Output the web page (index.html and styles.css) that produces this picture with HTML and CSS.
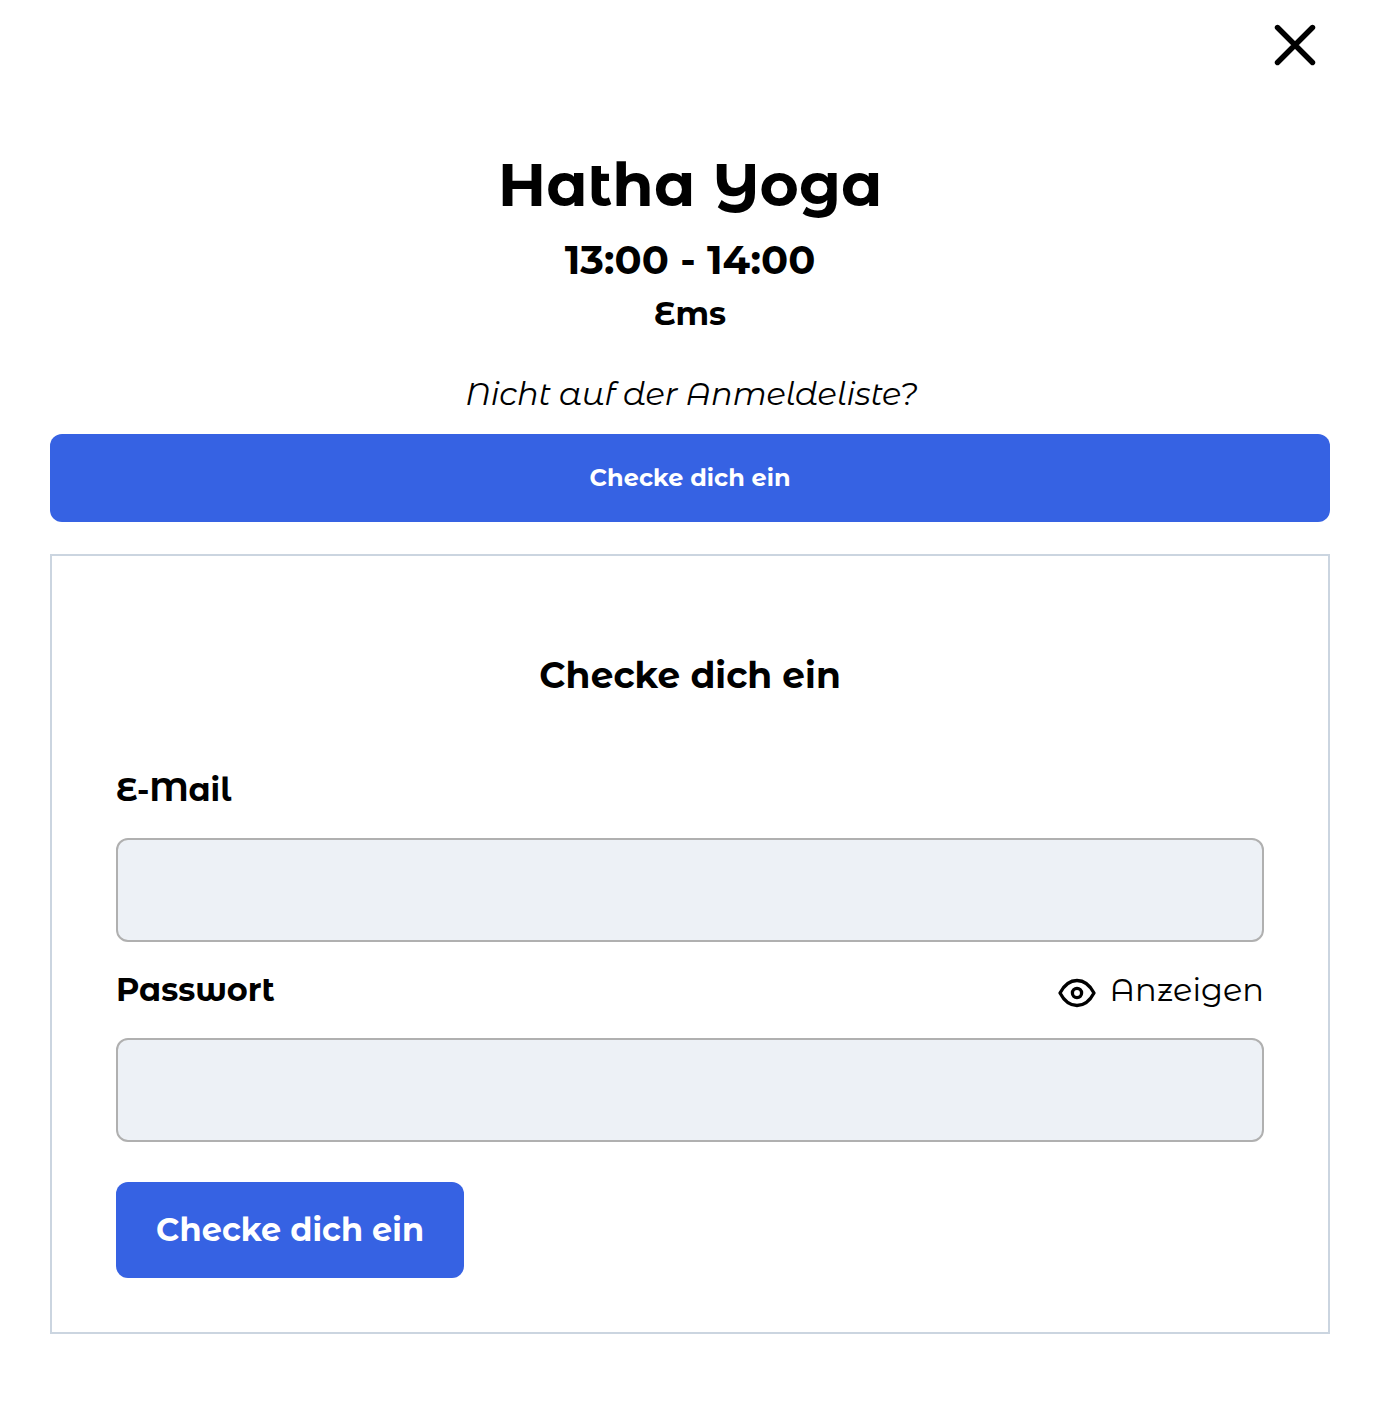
FILE: index.html
```html
<!DOCTYPE html>
<html lang="de">

<head>
    <meta charset="utf-8">
    <title>Hatha Yoga</title>
    <link rel="stylesheet" href="styles.css">
</head>

<body>
    <header class="topbar">
        <button type="button" class="close" aria-label="Schließen">
            <svg width="42" height="42" viewBox="0 0 42 42" fill="none" stroke="#000" stroke-width="5.4" stroke-linecap="round">
                <path d="M3.5 3.5L38.5 38.5M38.5 3.5L3.5 38.5"/>
            </svg>
        </button>
    </header>

    <main>
        <h1 class="title">Hatha Yoga</h1>
        <div class="time">13:00 - 14:00</div>
        <div class="teacher">Ems</div>
        <p class="hint">Nicht auf der Anmeldeliste?</p>
        <button type="button" class="btn btn-wide">Checke dich ein</button>

        <form class="panel">
            <h2 class="panel-title">Checke dich ein</h2>
            <div class="row">
                <label for="email">E-Mail</label>
            </div>
            <input type="email" id="email" name="email">
            <div class="row">
                <label for="password">Passwort</label>
                <a class="show">
                    <svg width="38" height="30" viewBox="0 0 38 30" fill="none" stroke="#000" stroke-width="3.3" stroke-linejoin="round">
                        <path d="M2 15C6.5 6.500 12.500 2.500 19 2.500S31.500 6.500 36 15C31.500 23.500 25.500 27.500 19 27.500S6.500 23.500 2 15Z"/>
                        <circle cx="19" cy="15" r="4.600"/>
                    </svg>
                    <span>Anzeigen</span>
                </a>
            </div>
            <input type="password" id="password" name="password">
            <button type="button" class="btn btn-submit">Checke dich ein</button>
        </form>
    </main>
</body>

</html>
```

FILE: styles.css
```css
*{
    box-sizing: border-box;
}

body{
    margin: 0;
    padding: 0 54px 80px 50px;
    font-family: "Montserrat Alternates", Montserrat, Inter, sans-serif;
    font-size: 32px;
    line-height: 48px;
    background-color: #fff;
    color: #000;
}

h1, h2, p{
    margin: 0;
}

.topbar{
    display: flex;
    justify-content: flex-end;
    height: 149px;
    padding: 24px 14px 0 0;
}

.close{
    width: 42px;
    height: 42px;
    padding: 0;
    border: none;
    background: none;
}

.close svg{
    display: block;
}

main{
    text-align: center;
}

.title{
    font-size: 60px;
    line-height: 72px;
    font-weight: 700;
}

.time{
    margin-top: 11px;
    font-size: 40px;
    line-height: 56px;
    font-weight: 700;
}

.teacher{
    margin-top: 2px;
    font-weight: 700;
}

.hint{
    margin-top: 32px;
    padding-left: 3px;
    font-style: italic;
    font-weight: 400;
    letter-spacing: -0.13px;
}

.btn{
    display: block;
    border: none;
    border-radius: 12px;
    background-color: #3662e3;
    color: #fff;
    font-family: inherit;
    font-weight: 700;
}

.btn-wide{
    width: 100%;
    height: 88px;
    margin: 16px 0 32px;
    padding: 0 0 2px;
    font-size: 24px;
}

.panel{
    padding: 92px 64px 54px;
    border: 2px solid #cbd5e0;
    text-align: left;
}

.panel-title{
    margin-bottom: 64px;
    font-size: 36px;
    line-height: 54px;
    font-weight: 700;
    text-align: center;
}

.row{
    display: flex;
    justify-content: space-between;
    height: 48px;
    margin-bottom: 24px;
}

label{
    font-weight: 700;
}

.show{
    display: flex;
    align-items: center;
    gap: 13px;
    font-weight: 400;
}

.show svg{
    position: relative;
    top: 3px;
}

input{
    display: block;
    width: 100%;
    height: 104px;
    margin: 0 0 24px;
    padding: 16px;
    border: 2px solid #b0b0b0;
    border-radius: 12px;
    background-color: #edf1f6;
    font: inherit;
}

.btn-submit{
    width: 348px;
    height: 96px;
    margin-top: 40px;
    padding: 0 0 2px;
    font-size: 32px;
}
```
